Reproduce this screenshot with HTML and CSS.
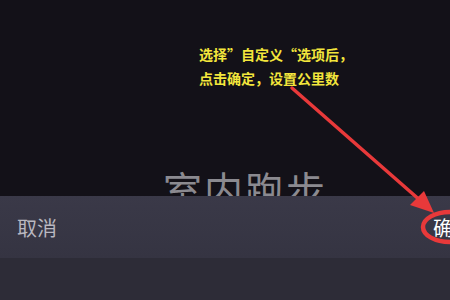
FILE: index.html
```html
<!DOCTYPE html>
<html lang="zh">
<head>
<meta charset="utf-8">
<link rel="stylesheet" href="styles.css">
</head>
<body>
<div class="screen">
  <div class="top">
    <div class="note">
      <p>选择”自定义“选项后，</p>
      <p>点击确定，设置公里数</p>
    </div>
    <div class="title">室内跑步</div>
  </div>
  <div class="bar">
    <div class="actions">
      <span class="cancel">取消</span>
      <span class="ok">确定</span>
    </div>
    <div class="lower"></div>
  </div>
  <svg class="overlay" width="450" height="300" viewBox="0 0 450 300">
    <line x1="292" y1="88" x2="422" y2="202" stroke="#e8393a" stroke-width="3.5" stroke-linecap="round"/>
    <polygon points="434,213 410,205 424,191" fill="#e8393a"/>
    <ellipse cx="450" cy="227" rx="27" ry="15" fill="none" stroke="#e8393a" stroke-width="4.5"/>
  </svg>
</div>
</body>
</html>
```
FILE: styles.css
```css
html, body {
  margin: 0;
  padding: 0;
  background: #131118;
}
.screen {
  position: relative;
  width: 450px;
  height: 300px;
  overflow: hidden;
  display: flex;
  flex-direction: column;
  font-family: "Noto Sans CJK SC", "Noto Sans", sans-serif;
}
.top {
  height: 196px;
  flex: none;
  overflow: hidden;
  background: #131118;
  display: flex;
  flex-direction: column;
  align-items: center;
  box-sizing: border-box;
  padding-top: 42px;
}
.note {
  margin-left: 102px;
  color: #f3e63c;
  font-weight: 700;
  font-size: 14px;
  line-height: 24px;
}
.note p {
  margin: 0;
  white-space: nowrap;
}
.title {
  margin-top: 72px;
  margin-left: 40px;
  color: #8b8a90;
  font-size: 39px;
  line-height: 52px;
  letter-spacing: 2px;
  white-space: nowrap;
}
.bar {
  flex: 1;
  display: flex;
  flex-direction: column;
}
.actions {
  height: 62px;
  background: linear-gradient(180deg, #3a3948 0%, #353442 100%);
  display: flex;
  align-items: center;
  justify-content: space-between;
  padding: 0 0 0 17px;
  box-sizing: border-box;
  font-size: 20px;
  line-height: 28px;
}
.cancel {
  color: #b9b8c0;
  padding-top: 2px;
}
.ok {
  color: #ffffff;
  margin-right: -23px;
  padding-top: 2px;
}
.lower {
  flex: 1;
  background: #2d2c37;
}
.overlay {
  position: absolute;
  left: 0;
  top: 0;
  pointer-events: none;
}
```
